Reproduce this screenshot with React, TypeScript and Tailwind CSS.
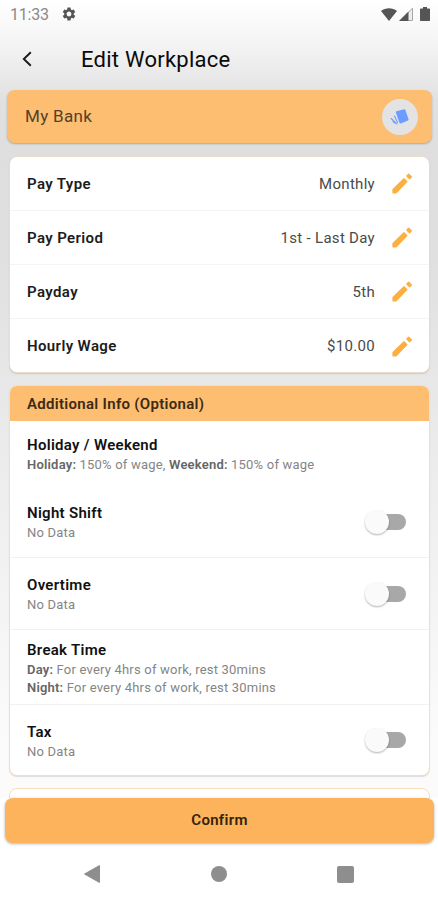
import type { ReactNode } from 'react';
import { MdSettings } from 'react-icons/md';

function PencilIcon() {
  return (
    <svg className="w-[21px] h-[21px]" viewBox="0 0 21 21" fill="#fcae3f" stroke="#fcae3f" strokeWidth="1.2" strokeLinejoin="round">
      <path d="M1 16.500L12 5.700l2.900 2.900L4.100 19.800H1z" />
      <path d="M14.800 3l1.900-1.900 2.800 2.800-1.900 2z" />
    </svg>
  );
}

function CardsIcon() {
  return (
    <svg className="w-5 h-5" viewBox="0 0 20 20" fill="#6c9cff" stroke="#6c9cff" strokeLinejoin="round" strokeLinecap="round">
      <path d="M6.800 5.200L14.300 3.200l3.300 9.300-7.200 3z" strokeWidth="2" />
      <path d="M4.500 9l3 6.500M1.200 11.500l4.800 4.600M3 14.800l4 2.200" strokeWidth="1.100" fill="none" />
    </svg>
  );
}

interface PayRowProps {
  label: string;
  value: string;
}

function PayRow({ label, value }: PayRowProps) {
  return (
    <div className="h-[54px] pl-[17px] pr-4 flex items-center border-b border-[#f4f4f4] last:border-b-0">
      <span className="flex-1 pt-px text-[15px] tracking-[0.38px] font-semibold text-[#1c1c1c]">{label}</span>
      <span className="pt-px text-[15px] tracking-[0.3px] text-[#4a4a4a] mr-[17px]">{value}</span>
      <PencilIcon />
    </div>
  );
}

function Toggle() {
  return (
    <button className="relative w-[41px] h-6 flex items-center justify-end">
      <span className="w-8 h-4 rounded-full bg-[#a8a8a8]" />
      <span className="absolute left-0 top-0 w-6 h-6 rounded-full bg-[#fafafa] shadow-[0_1px_2px_rgba(0,0,0,0.3)]" />
    </button>
  );
}

interface InfoRowProps {
  title: string;
  className: string;
  toggle?: boolean;
  children: ReactNode;
}

function InfoRow({ title, className, toggle, children }: InfoRowProps) {
  return (
    <div className={`pl-[17px] pr-[23px] flex items-center justify-between ${className}`}>
      <div className="pt-px">
        <div className="text-[15px] leading-[22px] tracking-[0.3px] font-semibold text-[#111]">{title}</div>
        <div className="text-[13px] leading-[18px] tracking-[0.2px] text-[#858585]">{children}</div>
      </div>
      {toggle && <Toggle />}
    </div>
  );
}

function StatusBar() {
  return (
    <div className="h-7 pl-[10px] pr-[8px] flex items-center text-[#555]">
      <span className="pt-px text-[16px] tracking-[-0.2px] text-[#8a8a8a]">11:33</span>
      <MdSettings className="w-4 h-4 ml-3" />
      <div className="ml-auto flex items-center">
        <svg className="w-4 h-[13px]" viewBox="0 0 16 13" fill="currentColor">
          <path d="M0 3C4.500-.8 11.500-.8 16 3L8 13z" />
        </svg>
        <svg className="w-[14px] h-[14px] ml-[2px]" viewBox="0 0 14 14">
          <path d="M13.500 1.200v12.300H1.200z" fill="#ededed" stroke="#a6a6a6" />
          <path d="M9.500 4.500V14H0z" fill="currentColor" />
        </svg>
        <svg className="w-[10px] h-[14px] ml-[7px]" viewBox="0 0 10 14" fill="currentColor">
          <path d="M3 0h4v1.500h2.200q.8 0 .8.800v10.900q0 .8-.8.800H.8q-.8 0-.8-.8V2.300q0-.8.8-.8H3z" />
        </svg>
      </div>
    </div>
  );
}

export default function App() {
  return (
    <div className="w-[438px] h-[900px] overflow-hidden flex flex-col bg-white font-['Roboto',sans-serif]">
      <div className="h-[798px] overflow-hidden bg-[linear-gradient(to_bottom,#ffffff_0px,#f5f5f5_40px,#e1e1e1_100px,#dedede_160px,#e0e0e0_260px,#ededed_480px,#fcfbfb_740px)]">
        <StatusBar />

        <header className="h-[62px] pl-[22px] flex items-center">
          <svg className="w-[10px] h-4" viewBox="0 0 10 16" fill="none" stroke="#1a1a1a" strokeWidth="1.9">
            <path d="M8.800 1.200L1.800 8l7 6.800" />
          </svg>
          <h1 className="ml-[49px] text-[22px] tracking-[0.25px] text-[#0a0a0a]">Edit Workplace</h1>
        </header>

        <div className="ml-[7px] mr-[6px] h-[53px] pl-[18px] pr-[14px] flex items-center justify-between rounded-lg bg-[#fdbe72] shadow-[0_1px_2px_rgba(0,0,0,0.25)]">
          <span className="pt-px text-[17px] tracking-[0.3px] text-[#54402a]">My Bank</span>
          <span className="w-9 h-9 rounded-full bg-[#e3e3e3] flex items-center justify-center">
            <CardsIcon />
          </span>
        </div>

        {/* Pay settings */}
        <section className="mt-[13px] ml-[9px] mr-2 h-[217px] rounded-lg border border-[#eadcc9] bg-white shadow-[0_1px_1px_rgba(0,0,0,0.12)]">
          <PayRow label="Pay Type" value="Monthly" />
          <PayRow label="Pay Period" value="1st - Last Day" />
          <PayRow label="Payday" value="5th" />
          <PayRow label="Hourly Wage" value="$10.00" />
        </section>

        {/* Optional info */}
        <section className="mt-3 ml-[9px] mr-2 h-[391px] overflow-hidden rounded-lg border border-[#fbdcb6] bg-white shadow-[0_1px_1px_rgba(0,0,0,0.12)]">
          <h2 className="h-[35px] pt-px pl-[17px] flex items-center bg-[#fdbe72] text-[15px] tracking-[0.3px] font-semibold text-[#3c2b14]">
            Additional Info (Optional)
          </h2>
          <InfoRow title="Holiday / Weekend" className="h-[65px]">
            <b className="font-semibold text-[#666]">Holiday:</b> 150% of wage, <b className="font-semibold text-[#666]">Weekend:</b> 150% of wage
          </InfoRow>
          <InfoRow title="Night Shift" className="h-[72px] border-b border-[#f2f2f2]" toggle>
            No Data
          </InfoRow>
          <InfoRow title="Overtime" className="h-[72px] border-b border-[#f2f2f2]" toggle>
            No Data
          </InfoRow>
          <InfoRow title="Break Time" className="h-[75px] border-b border-[#f2f2f2]">
            <div><b className="font-semibold text-[#666]">Day:</b> For every 4hrs of work, rest 30mins</div>
            <div><b className="font-semibold text-[#666]">Night:</b> For every 4hrs of work, rest 30mins</div>
          </InfoRow>
          <InfoRow title="Tax" className="h-[70px]" toggle>
            No Data
          </InfoRow>
        </section>

        <section className="mt-3 ml-[9px] mr-2 h-10 rounded-lg border border-[#fbdcb6] bg-white" />
      </div>

      <button className="ml-[5px] mr-1 h-[45px] shrink-0 rounded-lg bg-[#fdb35b] text-[15px] tracking-[0.3px] font-semibold text-[#33230d] shadow-[0_1px_3px_rgba(0,0,0,0.3)]">
        Confirm
      </button>

      <nav className="flex-1 px-[84px] mt-[5px] flex items-center justify-between text-[#8e8e8e]">
        <svg className="w-4 h-[18px]" viewBox="0 0 16 18" fill="currentColor">
          <path d="M15.500.5v17L.5 9z" stroke="currentColor" strokeLinejoin="round" />
        </svg>
        <span className="w-4 h-4 rounded-full bg-[#8e8e8e]" />
        <span className="w-[17px] h-[17px] rounded-[2px] bg-[#8e8e8e]" />
      </nav>
    </div>
  );
}
